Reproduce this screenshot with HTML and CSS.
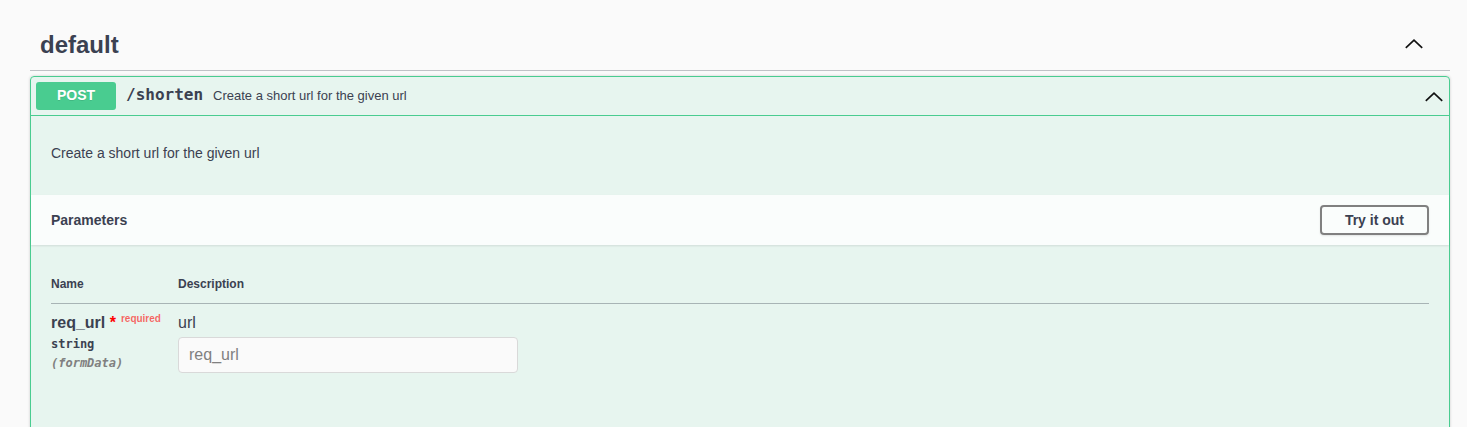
FILE: index.html
```html
<!DOCTYPE html>
<html lang="en">
<head>
<meta charset="utf-8">
<title>Swagger UI</title>
<link rel="stylesheet" href="styles.css">
</head>
<body>
<div class="wrapper">
  <section class="tag-section">
    <h3 class="tag-header">
      <span class="tag-name">default</span>
      <svg class="arrow" width="20" height="20" viewBox="0 0 20 20"><polyline points="1.8,13.8 10,6.2 18.2,13.8" /></svg>
    </h3>
    <div class="opblock">
      <div class="summary">
        <span class="method">POST</span>
        <span class="path">/shorten</span>
        <span class="summary-desc">Create a short url for the given url</span>
        <svg class="arrow" width="20" height="20" viewBox="0 0 20 20"><polyline points="1.8,13.8 10,6.2 18.2,13.8" /></svg>
      </div>
      <div class="body">
        <div class="desc-wrapper">
          <p>Create a short url for the given url</p>
        </div>
        <div class="section-header">
          <h4>Parameters</h4>
          <button class="try-out" type="button">Try it out</button>
        </div>
        <div class="params-wrapper">
          <table class="params">
            <thead>
              <tr>
                <th class="col-name">Name</th>
                <th class="col-desc">Description</th>
              </tr>
            </thead>
            <tbody>
              <tr>
                <td class="col-name">
                  <div class="param-name">req_url<span class="star">&nbsp;*</span><span class="req">required</span></div>
                  <div class="param-type">string</div>
                  <div class="param-in">(formData)</div>
                </td>
                <td class="col-desc">
                  <p class="param-desc">url</p>
                  <input class="param-input" type="text" placeholder="req_url">
                </td>
              </tr>
            </tbody>
          </table>
        </div>
      </div>
    </div>
  </section>
</div>
</body>
</html>
```

FILE: styles.css
```css
* { box-sizing: border-box; }
html, body { margin: 0; padding: 0; }
body {
  background: #fafafa;
  font-family: "Liberation Sans", Arial, sans-serif;
  color: #3b4151;
}
.wrapper {
  padding: 20px 17px 0 30px;
}
.tag-header {
  display: flex;
  align-items: center;
  margin: 0 0 5px;
  padding: 10px 26px 10px 10px;
  height: 51px;
  border-bottom: 1px solid rgba(59, 65, 81, 0.3);
  font-size: 24px;
  font-weight: 700;
  color: #3b4151;
}
.tag-name { flex: 1; line-height: 30px; }
.arrow { display: block; flex: none; }
.arrow polyline {
  fill: none;
  stroke: #111;
  stroke-width: 1.7;
}
.tag-header .arrow { margin-top: -3px; }
.opblock {
  border: 1px solid #49cc90;
  border-radius: 4px;
  background: rgba(73, 204, 144, 0.1);
  box-shadow: 0 0 3px rgba(0, 0, 0, 0.19);
  min-height: 360px;
}
.summary {
  display: flex;
  align-items: center;
  padding: 5px;
  border-bottom: 1px solid #49cc90;
}
.method {
  min-width: 80px;
  padding: 5px 15px 7px;
  border-radius: 3px;
  background: #49cc90;
  color: #fff;
  font-size: 14px;
  font-weight: 700;
  line-height: 16px;
  text-align: center;
  text-shadow: 0 1px 0 rgba(0, 0, 0, 0.1);
}
.path {
  padding: 0 10px;
  font-family: "DejaVu Sans Mono", monospace;
  font-size: 16px;
  font-weight: 600;
  line-height: 18px;
  color: #3b4151;
  position: relative;
  top: -1px;
}
.summary-desc {
  flex: 1;
  font-size: 13px;
  line-height: 15px;
  color: #3b4151;
  position: relative;
  top: -1px;
}
.summary .arrow { margin-top: 2px; }
.desc-wrapper {
  padding: 15px 20px;
  margin-bottom: 5px;
  font-size: 14px;
}
.desc-wrapper p {
  margin: 14px 0;
  line-height: 16px;
}
.section-header {
  display: flex;
  align-items: center;
  justify-content: space-between;
  min-height: 50px;
  padding: 8px 20px;
  background: rgba(255, 255, 255, 0.8);
  box-shadow: 0 1px 2px rgba(0, 0, 0, 0.1);
}
.section-header h4 {
  margin: 0;
  font-size: 14px;
  font-weight: 700;
  color: #3b4151;
}
.try-out {
  padding: 5px 23px;
  border: 2px solid #808080;
  border-radius: 4px;
  background: transparent;
  box-shadow: 0 1px 2px rgba(0, 0, 0, 0.1);
  font-family: "Liberation Sans", Arial, sans-serif;
  font-size: 14px;
  font-weight: 700;
  line-height: 16px;
  color: #3b4151;
}
.params-wrapper {
  padding: 20px;
}
.params {
  width: 100%;
  border-collapse: collapse;
}
.params th {
  padding: 12px 0;
  border-bottom: 1px solid rgba(59, 65, 81, 0.2);
  font-size: 12px;
  font-weight: 700;
  line-height: 14px;
  text-align: left;
  color: #3b4151;
}
.params th.col-name, .params td.col-name { width: 127px; }
.params td {
  padding: 10px 0;
  vertical-align: top;
}
.param-name {
  font-size: 16px;
  font-weight: 700;
  line-height: 18px;
  white-space: nowrap;
}
.star {
  color: red;
  font-size: 16px;
}
.req {
  position: relative;
  top: -6px;
  padding-left: 5px;
  font-size: 10px;
  color: rgba(255, 0, 0, 0.6);
}
.param-type {
  padding: 3px 0 0;
  font-family: "DejaVu Sans Mono", monospace;
  font-size: 12px;
  font-weight: 600;
  line-height: 14px;
}
.param-in {
  padding-top: 5px;
  font-family: "DejaVu Sans Mono", monospace;
  font-size: 12px;
  font-weight: 600;
  font-style: italic;
  line-height: 14px;
  color: #808080;
}
.param-desc {
  margin: 0;
  font-size: 16px;
  line-height: 18px;
}
.param-input {
  display: block;
  width: 340px;
  height: 36px;
  margin-top: 5px;
  padding: 8px 10px;
  border: 1px solid #d9d9d9;
  border-radius: 4px;
  background: #fafafa;
  font-family: "Liberation Sans", Arial, sans-serif;
  font-size: 16px;
  color: #3b4151;
}
.param-input::placeholder { color: #808080; }
```
